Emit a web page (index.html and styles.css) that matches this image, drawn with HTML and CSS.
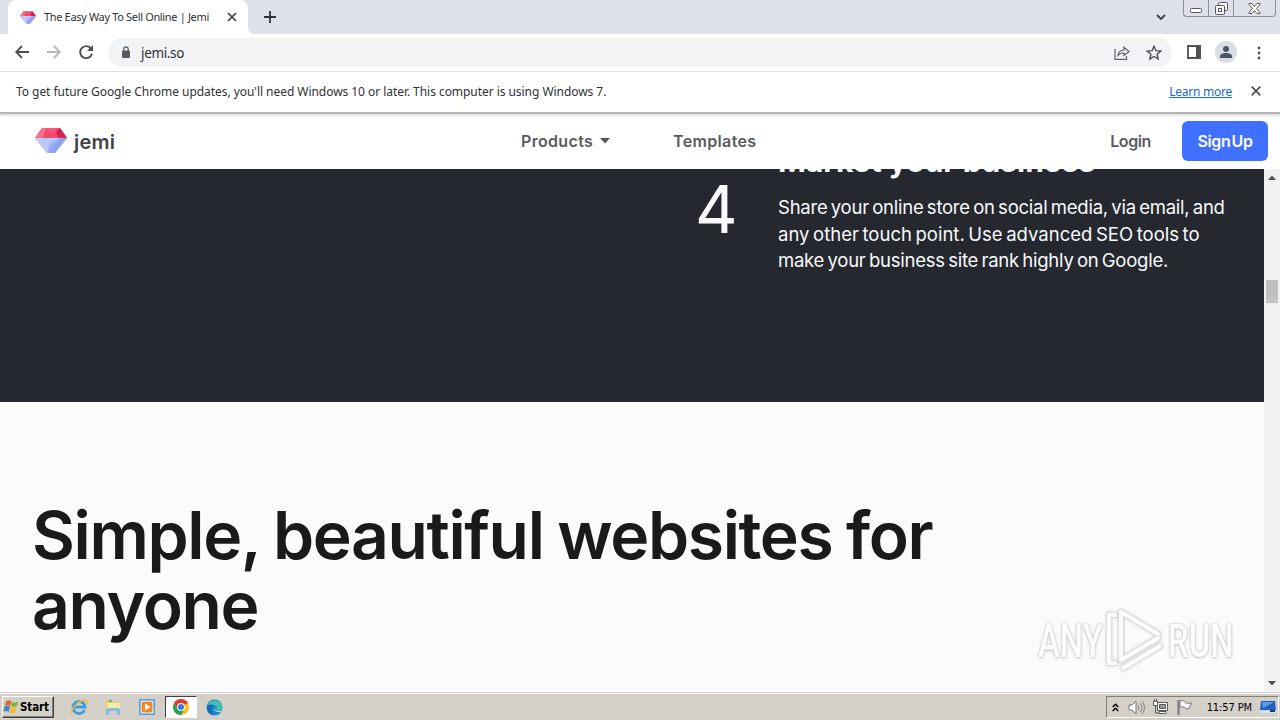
FILE: index.html
```html
<!DOCTYPE html>
<html lang="en">
<head>
    <meta charset="UTF-8">
    <meta name="viewport" content="width=device-width, initial-scale=1.0">
    <title>The Easy Way To Sell Online | Jemi</title>
    <link rel="stylesheet" href="styles.css">
</head>
<body>
    <!-- gem logo, used in the tab and in the site header -->
    <svg class="defs" width="0" height="0">
        <symbol id="gem" viewBox="0 0 32 25">
            <path d="M7 0h18l7 10H0z" fill="#f4486f"/>
            <path d="M0 10L7 0h4l-3 10z" fill="#f9708a"/>
            <path d="M11 0h11l-4 5z" fill="#f65d7e"/>
            <path d="M25 0l7 10-9-1-2-5z" fill="#d4204d"/>
            <path d="M0 10h32L20 25h-8z" fill="#9fb1f5"/>
            <path d="M0 10h10l4 7-2 8z" fill="#c3c8f6"/>
            <path d="M6 10h19L8 18z" fill="#b6cbfc"/>
            <path d="M32 10L20 25h-7l11-15z" fill="#8fa3ee"/>
        </symbol>
    </svg>

    <div class="tabstrip">
        <div class="tab">
            <svg class="favicon" width="16" height="13"><use href="#gem"/></svg>
            <span class="tab-title">The Easy Way To Sell Online | Jemi</span>
            <svg width="10" height="10" viewBox="0 0 10 10"><path d="M1 1l8 8M9 1L1 9" stroke="#3c4043" stroke-width="1.7"/></svg>
        </div>
        <svg class="tab-foot" width="8" height="8" viewBox="0 0 8 8"><path d="M0 0q0 8 8 8H0z" fill="#fff"/></svg>
        <svg class="new-tab" width="12" height="12" viewBox="0 0 12 12"><path d="M6 0v12M0 6h12" stroke="#303338" stroke-width="1.8"/></svg>
        <svg class="tab-search" width="10" height="7" viewBox="0 0 10 7"><path d="M1 1l4 4 4-4" fill="none" stroke="#3c4043" stroke-width="1.8"/></svg>
        <div class="window-buttons">
            <div class="wb minimize"><svg width="13" height="5" viewBox="0 0 13 5"><rect x=".5" y=".5" width="11" height="4" rx="1" fill="#fff" stroke="#53565e"/></svg></div>
            <div class="wb restore"><svg width="13" height="13" viewBox="0 0 13 13" fill="#f4f5f7" stroke="#53565e"><rect x="3.5" y=".5" width="9" height="8" rx="1"/><rect x=".5" y="3.5" width="9" height="9" rx="1"/><rect x="3.5" y="6.5" width="3" height="3"/></svg></div>
            <div class="wb close"><svg width="13" height="11" viewBox="0 0 13 11"><path d="M1 .5h3l2.500 3 2.500-3h3v1L8.500 5.500l3.500 4v1H9l-2.500-3-2.500 3H1v-1l3.500-4L1 1.500z" fill="#fff" stroke="#53565e"/></svg></div>
        </div>
    </div>

    <div class="toolbar">
        <svg class="nav-icon" width="14" height="14" viewBox="0 0 14 14"><path d="M14 7H1.500M7 1L1.200 7 7 13" fill="none" stroke="#4b4e52" stroke-width="1.8"/></svg>
        <svg class="nav-icon" width="14" height="14" viewBox="0 0 14 14"><path d="M0 7h12.500M7 1l5.800 6L7 13" fill="none" stroke="#b4b6b9" stroke-width="1.8"/></svg>
        <svg class="nav-icon" width="14" height="14" viewBox="0 0 14 14"><path d="M11.800 3.300A6 6 0 1 0 13 8.700" fill="none" stroke="#4b4e52" stroke-width="1.9"/><path d="M14 0v6H8z" fill="#4b4e52"/></svg>
        <div class="address">
            <svg class="lock" width="8" height="12" viewBox="0 0 8 12"><rect y="4.5" width="8" height="7.5" rx="1" fill="#55585d"/><path d="M1.800 5V3a2.200 2.200 0 0 1 4.400 0v2" fill="none" stroke="#55585d" stroke-width="1.2"/></svg>
            <span class="url">jemi.so</span>
            <svg width="16" height="14" viewBox="0 0 16 14" fill="none" stroke="#5f6368" stroke-width="1.2"><path d="M1 3v10.300h11.500V10"/><path d="M4 9.500C4.300 6 6.500 4.200 10 4V1.200L15 5.500 10 9.500V7C7 7 5.500 7.500 4 9.500z"/></svg>
            <svg class="star" width="16" height="15" viewBox="0 0 16 15"><path d="M8 1.200l1.900 4.500 4.900.4-3.700 3.200 1.100 4.700L8 11.500 3.800 14l1.100-4.700L1.200 6.100l4.900-.4z" fill="none" stroke="#4b4e52" stroke-width="1.4"/></svg>
        </div>
        <svg class="side-panel" width="14" height="14" viewBox="0 0 14 14"><path d="M1 1h12v12H1z" fill="#fff" stroke="#4f5155" stroke-width="1.8"/><path d="M9 0h5v14H9z" fill="#4f5155"/></svg>
        <div class="avatar"><svg width="12" height="12" viewBox="0 0 12 12" fill="#4d5567"><circle cx="6" cy="3" r="3"/><path d="M0 12v-2c0-2 3-3 6-3s6 1 6 3v2z"/></svg></div>
        <svg class="kebab" width="4" height="14" viewBox="0 0 4 14" fill="#4b4e52"><circle cx="2" cy="2" r="1.4"/><circle cx="2" cy="7" r="1.4"/><circle cx="2" cy="12" r="1.4"/></svg>
    </div>

    <div class="infobar">
        <span class="info-text">To get future Google Chrome updates, you'll need Windows 10 or later. This computer is using Windows 7.</span>
        <a class="learn-more" href="#">Learn more</a>
        <svg width="10" height="10" viewBox="0 0 10 10"><path d="M.7.7l8.600 8.600M9.300.7L.7 9.300" stroke="#4b4e52" stroke-width="1.7"/></svg>
    </div>

    <header class="site-header">
        <svg width="32" height="25"><use href="#gem"/></svg>
        <span class="brand">jemi</span>
        <nav class="site-nav">
            <a class="products">Products</a>
            <svg class="caret" width="10" height="6" viewBox="0 0 10 6"><path d="M0 0h10L5 5.500z" fill="#55565a"/></svg>
            <a class="templates">Templates</a>
        </nav>
        <a class="login">Login</a>
        <a class="signup">Sign Up</a>
    </header>

    <div class="viewport">
        <main class="page">
            <section class="steps">
                <div class="step-number">4</div>
                <div class="step-body">
                    <h3>Market your business</h3>
                    <p><span class="tight">Share your online store on social media, via email, and</span><br><span>any other touch point. Use advanced SEO tools to</span><br><span class="tight">make your business site rank highly on Google.</span></p>
                </div>
            </section>
            <section class="websites">
                <h1>Simple, beautiful websites for<br>anyone</h1>
            </section>
        </main>
        <div class="scrollbar">
            <svg width="8" height="5" viewBox="0 0 8 5"><path d="M0 5l4-4.500L8 5z" fill="#505050"/></svg>
            <div class="thumb"></div>
            <svg width="8" height="5" viewBox="0 0 8 5"><path d="M0 0h8L4 4.500z" fill="#505050"/></svg>
        </div>
        <div class="watermark">
            <span class="any">ANY</span>
            <svg width="62" height="66" viewBox="0 0 62 66" fill="none" stroke-linejoin="round" stroke-linecap="round">
                <g class="mark-shade"><path d="M12 8H6v48h6"/><path d="M18 5l37 22M18 5v48l37-22M20 61l37-22"/></g>
                <g class="mark-line"><path d="M12 8H6v48h6"/><path d="M18 5l37 22M18 5v48l37-22M20 61l37-22"/></g>
            </svg>
            <span class="run">RUN</span>
        </div>
    </div>

    <div class="taskbar">
        <div class="start">
            <svg width="17" height="16" viewBox="0 0 16 15"><path d="M3 2c2-1.500 3.500-1 5 0L6.800 6.500c-1.500-1-3-1-5 0z" fill="#e8602c"/><path d="M8.500 2.500c2 1 3.500 1 6-.5l-1.500 4.500c-2 1.300-4 1.200-5.500.4z" fill="#7cb83c"/><path d="M1.500 7c2-1 3.500-1 5 0L5.300 12c-1.500-1-3-1-5 0z" fill="#3e82d0"/><path d="M7.200 7.500c2 1 3.500.9 5.500-.4L11.500 12.500c-2 1.300-3.800 1.100-5.400.2z" fill="#f4bd2f"/></svg>
            <span>Start</span>
        </div>
        <div class="quick-launch">
            <svg width="18" height="18" viewBox="0 0 18 18" fill="none"><path d="M14.500 12A6 6 0 1 1 15 9H4" stroke="#3aa0dd" stroke-width="2.8"/><path d="M2 16C-.5 13 8 2 15 2c2.500 0 2.500 2 1.500 4" stroke="#edbd3a" stroke-width="1.5"/></svg>
            <svg width="18" height="18" viewBox="0 0 18 18"><path d="M2 2h5l1 2h7v9H2z" fill="#e9c968"/><path d="M3 5h13v8H3z" fill="#f8e9a5"/><path d="M5 2h3v2H5z" fill="#5fba6b"/><path d="M2 17v-5q0-2 2-2h10q2 0 2 2v5h-3v-4H5v4z" fill="#82bfe3"/></svg>
            <svg width="18" height="18" viewBox="0 0 18 18"><path d="M1 1h16v16H1z" fill="#5f9cd6"/><path d="M2.500 2.500h13v13h-13z" fill="#cfe2f0"/><path d="M4 4h10v10H4z" fill="#f6861f"/><circle cx="9" cy="9" r="5.600" fill="#f6861f"/><path d="M7 5.500v7L12.500 9z" fill="#fff"/></svg>
            <div class="task-active">
                <svg width="16" height="16" viewBox="0 0 16 16"><circle cx="8" cy="8" r="8" fill="#fbc116"/><path d="M8 8L4.500 10 1.100 4A8 8 0 0 1 14.900 4z" fill="#e33b2e"/><path d="M8 8l-3.500 2L1.100 4A8 8 0 0 0 8 16l3.500-6z" fill="#22a153"/><circle cx="8" cy="8" r="4" fill="#fff"/><circle cx="8" cy="8" r="3" fill="#3b79e5"/></svg>
            </div>
            <svg class="edge" width="17" height="17" viewBox="0 0 17 17"><circle cx="8.5" cy="8.5" r="8" fill="#1687cc"/><path d="M1 7a8 8 0 0 1 15.500 1c.2 3-3 4-6 3 1-2 .2-5-3-5-3 0-5 0-6.500 1z" fill="#3fc0b0"/><path d="M1 7c2-2 6-2 7-.5-3 1-4 6 0 9C3 16 .5 11 1 7z" fill="#1769bd"/><path d="M9 7c-2 3 1 6 7.500 4.500L15 13C11 14 6 11 9 7z" fill="#d4d6d4"/></svg>
        </div>
        <div class="tray">
            <svg width="7" height="9" viewBox="0 0 7 9"><path d="M.7 4l2.800-2.800L6.300 4M.7 8l2.800-2.800L6.300 8" fill="none" stroke="#000" stroke-width="1.4"/></svg>
            <svg class="volume" width="17" height="15" viewBox="0 0 17 15"><path d="M1 5h3l4-4v13l-4-4H1z" fill="#fff" stroke="#747474"/><path d="M10 5q2 2.500 0 5M12 3q4 4.500 0 9M14 1q5 6.500 0 13" fill="none" stroke="#808080"/></svg>
            <svg class="network" width="17" height="16" viewBox="0 0 17 16" stroke="#5a5a5a"><path d="M5.500 3.500h10v8h-10z" fill="#fff"/><path d="M7.500 5.500h6v4h-6z" fill="#999"/><path d="M7 14.500h7v-2H7z" fill="#fff"/><path d="M1.500 2.500h4v4h-4zM2.500 0v2M4.500 0v2" fill="#fff"/><path d="M3.500 7v7H7" fill="none"/></svg>
            <svg class="flag" width="17" height="16" viewBox="0 0 17 16"><path d="M2.500 1v15" stroke="#777" stroke-width="2"/><path d="M4 2c3-1 4 0 5 1.500 2 1 3 1 6.500.5L13 9.500C10 10 9 9 8 8 6 7.500 5 8 4 8.500z" fill="#fff" stroke="#777"/></svg>
            <span class="clock">11:57 PM</span>
            <svg width="16" height="14" viewBox="0 0 16 14"><path d="M1 1h14l1 9H0z" fill="#235fbb"/><path d="M2 2h12L3 8z" fill="#5b9ee8"/><path d="M0 11h16v2H0z" fill="#d5e2ee"/><path d="M10 10h5v2h-5z" fill="#123c7c"/></svg>
        </div>
    </div>
</body>
</html>
```
FILE: styles.css
```css
* {
    box-sizing: border-box;
}

body {
    margin: 0;
    width: 1280px;
    height: 720px;
    overflow: hidden;
    display: flex;
    flex-direction: column;
    background: #fff;
    font-family: "Noto Sans", sans-serif;
    font-size: 12px;
    color: #303236;
}

svg {
    flex: none;
    display: block;
}

.defs {
    position: absolute;
}

span, a {
    white-space: nowrap;
}

/* browser chrome */
.tabstrip {
    flex: none;
    height: 34px;
    background: #dee1e9;
    display: flex;
    align-items: flex-start;
    padding-left: 8px;
}

.tab {
    width: 240px;
    height: 34px;
    background: #fff;
    border-radius: 8px 8px 0 0;
    display: flex;
    align-items: center;
    padding: 0 11px 0 12px;
}

.tab-title {
    flex: 1;
    margin-left: 8px;
    padding-bottom: 2px;
    font-size: 11px;
    letter-spacing: -0.34px;
}

.tab-foot {
    align-self: flex-end;
}

.new-tab {
    margin: 11px 0 0 8px;
}

.tab-search {
    margin: 14px 17px 0 auto;
}

.window-buttons {
    display: flex;
    width: 93px;
    height: 17px;
    border: 1px solid #8b8f98;
    border-top: 0;
    border-radius: 0 0 4px 4px;
    margin-right: 4px;
}

.wb {
    display: flex;
    align-items: center;
    justify-content: center;
    width: 25px;
    border-right: 1px solid #8b8f98;
}

.wb.minimize {
    padding-top: 5px;
}

.wb.close {
    flex: 1;
    border-right: 0;
}

.toolbar {
    flex: none;
    height: 38px;
    display: flex;
    align-items: center;
    padding: 0 19px 0 15px;
    border-bottom: 1px solid #dcdddf;
}

.nav-icon {
    margin: 0 18px 1px 0;
}

.address {
    flex: 1;
    height: 29px;
    margin-left: -3px;
    background: #f1f3f4;
    border-radius: 15px;
    display: flex;
    align-items: center;
    padding: 0 10px 0 14px;
}

.lock {
    margin-bottom: 2px;
}

.url {
    flex: 1;
    margin-left: 11px;
    font-size: 13.5px;
    letter-spacing: -0.35px;
}

.star {
    margin-left: 16px;
}

.side-panel {
    margin: 0 0 1px 15px;
}

.avatar {
    width: 22px;
    height: 22px;
    margin: 0 20px 1px 14px;
    border-radius: 50%;
    background: #dadde5;
    display: flex;
    align-items: center;
    justify-content: center;
}

.infobar {
    flex: none;
    height: 42px;
    display: flex;
    align-items: center;
    padding: 0 19px 2px 16px;
    border-bottom: 2px solid #b4b4b4;
}

.info-text {
    flex: 1;
    letter-spacing: -0.05px;
}

.learn-more {
    color: #1a67c9;
    margin-right: 19px;
    letter-spacing: -0.25px;
}

/* jemi site */
.site-header {
    flex: none;
    height: 55px;
    display: flex;
    align-items: center;
    padding: 0 12px 2px 35px;
    font-family: Inter, sans-serif;
    font-size: 16px;
    font-weight: 600;
    color: #5a5b5e;
    box-shadow: inset 0 3px 2px -1px #e2e2e2;
}

.brand {
    width: 60px;
    margin-left: 7px;
    padding-top: 2px;
    font-size: 20px;
    letter-spacing: 0.2px;
    color: #424347;
}

.site-nav {
    display: flex;
    align-items: center;
    flex: 1;
    padding-left: 387px;
    letter-spacing: 0.33px;
}

.caret {
    margin: 1px 63px 0 7px;
}

.login {
    margin-right: 31px;
    letter-spacing: -0.4px;
}

.signup {
    width: 86px;
    height: 40px;
    line-height: 40px;
    text-align: center;
    border-radius: 6px;
    background: #4070ff;
    color: #fff;
    letter-spacing: -0.38px;
    word-spacing: -2.5px;
}

.viewport {
    flex: 1;
    min-height: 0;
    display: flex;
    position: relative;
    font-family: Inter, sans-serif;
}

.page {
    flex: 1;
    background: #fbfbfb;
    overflow: hidden;
}

.steps {
    height: 233px;
    background: #262830;
    color: #f8fafb;
    display: flex;
    padding-left: 695px;
    overflow: hidden;
}

.step-number {
    width: 83px;
    font-size: 66px;
    line-height: 81px;
}

.step-body h3 {
    margin: -28px 0 13px;
    font-size: 30px;
    line-height: 40px;
    font-weight: 700;
}

.step-body p {
    margin: 0;
    font-size: 18.5px;
    line-height: 26.5px;
    word-spacing: -1.6px;
}

.tight {
    letter-spacing: -0.24px;
}

.websites {
    padding: 98px 33px 0;
    color: #1a1a1b;
}

.websites h1 {
    margin: 0 0 0 -1px;
    font-size: 66px;
    line-height: 70px;
    font-weight: 600;
    letter-spacing: -1.38px;
    word-spacing: -1.5px;
}

.scrollbar {
    width: 16px;
    background: #f1f1f1;
    display: flex;
    flex-direction: column;
    align-items: center;
    padding: 6px 0;
}

.thumb {
    width: 12px;
    height: 23px;
    margin: 100px 0 auto;
    background: #c1c1c1;
}

.watermark {
    position: absolute;
    left: 1038px;
    top: 438px;
    display: flex;
    align-items: center;
    font-family: Roboto, sans-serif;
    font-size: 47px;
    font-weight: 500;
    color: #fdfdfd;
    text-shadow: 0 0 3px #bbb, 0 1px 3px #ccc;
}

.any, .run {
    width: 65px;
    transform: scaleX(0.7);
    transform-origin: left;
}

.run {
    margin-left: 3px;
}

.mark-shade {
    stroke: #d6d6d6;
    stroke-width: 7;
    filter: blur(1px);
}

.mark-line {
    stroke: #fcfcfc;
    stroke-width: 4;
}

/* windows taskbar */
.taskbar {
    flex: none;
    height: 28px;
    display: flex;
    align-items: center;
    background: #d4d0c8;
    border-top: 1px solid #d4d0c8;
    box-shadow: inset 0 1px #fff;
    padding: 1px 1px 0 2px;
}

.start {
    width: 52px;
    height: 22px;
    display: flex;
    align-items: center;
    border: 1px solid;
    border-color: #fff #404040 #404040 #fff;
    box-shadow: inset -1px -1px #808080;
    font-family: "DejaVu Sans Condensed", sans-serif;
    font-size: 11.5px;
    font-weight: 700;
    letter-spacing: -0.1px;
    color: #000;
}

.quick-launch {
    display: flex;
    align-items: center;
    margin-left: 16px;
    gap: 16px;
}

.task-active {
    width: 32px;
    height: 22px;
    margin: 0 -7px;
    background: #fff;
    border: 1px solid;
    border-color: #404040 #fff #fff #404040;
    display: flex;
    align-items: center;
    justify-content: center;
}

.tray {
    display: flex;
    align-items: center;
    width: 173px;
    height: 22px;
    margin-left: auto;
    padding: 0 2px 0 5px;
    border: 1px solid;
    border-color: #808080 #fff #fff #808080;
}

.volume {
    margin-left: 9px;
}

.network, .flag {
    margin-left: 7px;
}

.clock {
    flex: 1;
    text-align: right;
    margin-right: 8px;
    font-family: "DejaVu Sans Condensed", sans-serif;
    font-size: 11px;
    letter-spacing: -0.1px;
    color: #000;
}
```
